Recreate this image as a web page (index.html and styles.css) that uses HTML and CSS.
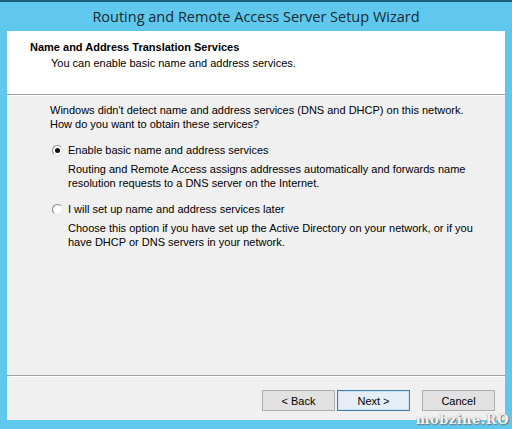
FILE: index.html
```html
<!DOCTYPE html>
<html>
<head>
<meta charset="utf-8">
<link rel="stylesheet" href="styles.css">
</head>
<body>
<div class="window">
  <div class="title">Routing and Remote Access Server Setup Wizard</div>
  <div class="client">
    <div class="header">
      <div class="h-title">Name and Address Translation Services</div>
      <div class="h-sub">You can enable basic name and address services.</div>
    </div>
    <div class="body">
      <p class="intro">Windows didn't detect name and address services (DNS and DHCP) on this network.<br>How do you want to obtain these services?</p>
      <div class="option">
        <span class="radio checked"></span>
        <span class="label">Enable basic name and address services</span>
      </div>
      <p class="desc">Routing and Remote Access assigns addresses automatically and forwards name<br>resolution requests to a DNS server on the Internet.</p>
      <div class="option second">
        <span class="radio"></span>
        <span class="label">I will set up name and address services later</span>
      </div>
      <p class="desc">Choose this option if you have set up the Active Directory on your network, or if you<br>have DHCP or DNS servers in your network.</p>
    </div>
    <div class="footer">
      <button class="btn">&lt; Back</button>
      <button class="btn next">Next &gt;</button>
      <button class="btn cancel">Cancel</button>
    </div>
  </div>
  <div class="watermark">mobzine.RO</div>
</div>
</body>
</html>
```
FILE: styles.css
```css
html, body {
  margin: 0;
  padding: 0;
}
body {
  width: 512px;
  height: 429px;
  overflow: hidden;
  font-family: "Liberation Sans", Arial, sans-serif;
  font-size: 11px;
  color: #000;
}
.window {
  position: relative;
  box-sizing: border-box;
  width: 512px;
  height: 429px;
  background: #5fc8ec;
  border-top: 2px solid #1d5f7a;
  padding: 0 7px 9px 7px;
  display: flex;
  flex-direction: column;
}
.title {
  height: 29px;
  line-height: 30px;
  text-align: center;
  font-family: "Open Sans", sans-serif;
  font-size: 14.5px;
  color: #1a2a33;
}
.client {
  flex: 1;
  background: #f0f0f0;
  display: flex;
  flex-direction: column;
}
.header {
  height: 64px;
  background: #fff;
  border-bottom: 1px solid #a0a0a0;
  box-shadow: 0 1px 0 #fff;
  box-sizing: border-box;
  padding: 9px 0 0 23px;
}
.h-title {
  font-weight: bold;
  line-height: 14px;
}
.h-sub {
  padding-left: 21px;
  line-height: 14px;
  margin-top: 2px;
}
.body {
  flex: 1;
  padding: 9px 0 0 43px;
}
.body p {
  margin: 0;
  line-height: 13.5px;
}
.option {
  display: flex;
  align-items: center;
  margin-top: 12px;
  height: 14px;
}
.option.second {
  margin-top: 12px;
}
.radio {
  width: 11px;
  height: 11px;
  box-sizing: border-box;
  border-radius: 50%;
  border: 1px solid #8a8a8a;
  border-right-color: #e6e6e6;
  border-bottom-color: #e6e6e6;
  background: #fff;
  margin-left: 2px;
  margin-right: 5px;
  position: relative;
}
.radio.checked::after {
  content: "";
  position: absolute;
  left: 2px;
  top: 2px;
  width: 5px;
  height: 5px;
  border-radius: 50%;
  background: #111;
}
.desc {
  padding-left: 18px;
  margin-top: 6px !important;
}
.footer {
  height: 45px;
  border-top: 1px solid #a0a0a0;
  box-shadow: inset 0 1px 0 #fff;
  box-sizing: border-box;
  display: flex;
  align-items: flex-start;
  padding: 14px 0 0 255px;
}
.btn {
  width: 73px;
  height: 21px;
  box-sizing: border-box;
  border: 1px solid #adadad;
  background: #e1e1e1;
  font-family: "Liberation Sans", Arial, sans-serif;
  font-size: 11px;
  color: #000;
  padding: 0;
  margin: 0;
}
.btn.next {
  margin-left: 2px;
  border-color: #3c7fb1;
  background: #e5eef5;
  box-shadow: inset 0 0 0 1px #cfe2f0;
}
.btn.cancel {
  margin-left: 12px;
}
.watermark {
  position: absolute;
  right: 3px;
  bottom: 2px;
  font-family: "DejaVu Serif", serif;
  font-weight: bold;
  font-size: 13px;
  color: #f4f4f4;
  letter-spacing: 0.5px;
  text-shadow: 0 0 1px #888, 1px 1px 1px #777;
}
```
